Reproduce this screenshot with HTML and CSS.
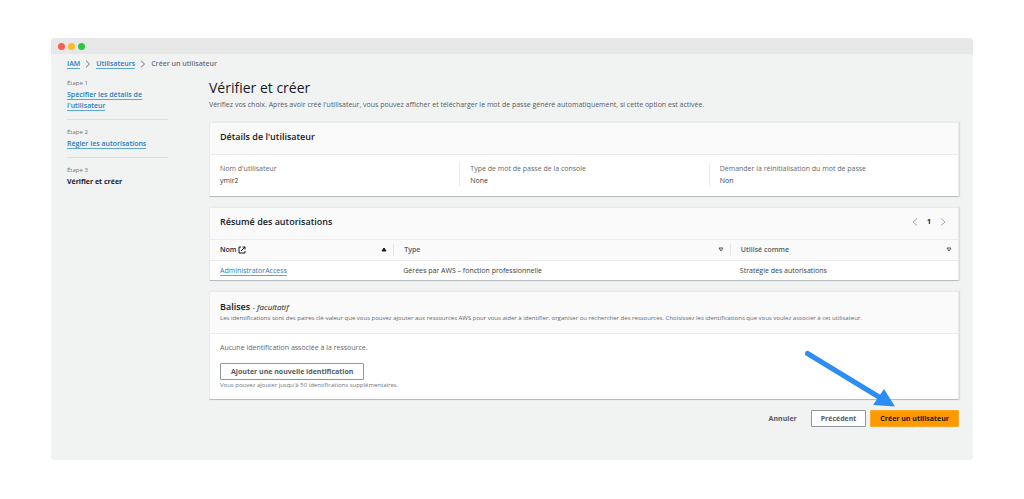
FILE: index.html
```html
<!DOCTYPE html>
<html lang="fr">
<head>
<meta charset="utf-8">
<title>Créer un utilisateur</title>
<link rel="stylesheet" href="styles.css">
</head>
<body>
<div class="window">
  <div class="titlebar"><span class="dot red"></span><span class="dot yellow"></span><span class="dot green"></span></div>
  <nav class="breadcrumb">
    <a href="#">IAM</a>
    <svg class="sep" viewBox="0 0 6 8"><path d="M1 .7 4.500 4 1 7.300"/></svg>
    <a href="#">Utilisateurs</a>
    <svg class="sep" viewBox="0 0 6 8"><path d="M1 .7 4.500 4 1 7.300"/></svg>
    <span>Créer un utilisateur</span>
  </nav>
  <div class="layout">
    <aside class="steps">
      <div class="step"><p>Étape 1</p><a href="#">Spécifier les détails de l'utilisateur</a></div>
      <div class="step"><p>Étape 2</p><a href="#">Régler les autorisations</a></div>
      <div class="step"><p>Étape 3</p><strong>Vérifier et créer</strong></div>
    </aside>
    <main>
      <h1>Vérifier et créer</h1>
      <p class="intro">Vérifiez vos choix. Après avoir créé l'utilisateur, vous pouvez afficher et télécharger le mot de passe généré automatiquement, si cette option est activée.</p>

      <section class="card">
        <header class="card-head"><h2>Détails de l'utilisateur</h2></header>
        <dl class="details">
          <div><dt>Nom d'utilisateur</dt><dd>ymir2</dd></div>
          <div><dt>Type de mot de passe de la console</dt><dd>None</dd></div>
          <div><dt>Demander la réinitialisation du mot de passe</dt><dd>Non</dd></div>
        </dl>
      </section>

      <section class="card">
        <header class="card-head">
          <h2>Résumé des autorisations</h2>
          <div class="pager">
            <button type="button" aria-label="Page précédente"><svg viewBox="0 0 6 8"><path d="M5 .5 1 4l4 3.500"/></svg></button>
            <b>1</b>
            <button type="button" aria-label="Page suivante"><svg viewBox="0 0 6 8"><path d="M1 .5 5 4 1 7.500"/></svg></button>
          </div>
        </header>
        <table>
          <colgroup><col class="col-name"><col class="col-type"><col class="col-use"></colgroup>
          <thead>
            <tr>
              <th scope="col" class="sorted"><div class="th"><span>Nom</span><svg class="ext" viewBox="0 0 8 8"><path d="M3 1H1v6h6V5M4.500 1H7v2.500M7 1 3 5"/></svg><svg class="sort full" viewBox="0 0 6 5"><path d="M3 1 5 4H1z"/></svg></div></th>
              <th scope="col"><div class="th"><span>Type</span><svg class="sort" viewBox="0 0 6 5"><path d="M1 1h4L3 4z"/></svg></div></th>
              <th scope="col"><div class="th"><span>Utilisé comme</span><svg class="sort" viewBox="0 0 6 5"><path d="M1 1h4L3 4z"/></svg></div></th>
            </tr>
          </thead>
          <tbody>
            <tr><td><a href="#">AdministratorAccess</a></td><td>Gérées par AWS – fonction professionnelle</td><td>Stratégie des autorisations</td></tr>
          </tbody>
        </table>
      </section>

      <section class="card">
        <header class="card-head tags-head">
          <h2>Balises <em>- facultatif</em></h2>
          <p>Les identifications sont des paires clé-valeur que vous pouvez ajouter aux ressources AWS pour vous aider à identifier, organiser ou rechercher des ressources. Choisissez les identifications que vous voulez associer à cet utilisateur.</p>
        </header>
        <div class="tags">
          <p>Aucune identification associée à la ressource.</p>
          <button type="button" class="btn">Ajouter une nouvelle identification</button>
          <small>Vous pouvez ajouter jusqu'à 50 identifications supplémentaires.</small>
        </div>
      </section>

      <footer class="actions">
        <button type="button" class="btn link">Annuler</button>
        <button type="button" class="btn">Précédent</button>
        <div class="target">
          <button type="button" class="btn primary">Créer un utilisateur</button>
          <svg class="arrow" viewBox="0 0 92 58" aria-hidden="true"><path class="shaft" d="M4.500 4.500 76 48"/><path class="tip" d="M81 40 92 57.500 70 56z"/></svg>
        </div>
      </footer>
    </main>
  </div>
</div>
</body>
</html>
```
FILE: styles.css
```css
* { box-sizing: border-box; }
body {
  margin: 0;
  padding: 38px 51px;
  background: #fff;
  color: #363d45;
  font: 7px/12px "Open Sans", "Noto Sans", sans-serif;
}
h1, h2, p, dl, dd { margin: 0; }
svg { fill: none; stroke: currentColor; flex: none; }
a {
  color: #1f7cc0;
  text-decoration: none;
  border-bottom: 1px solid #5fa6d8;
}
button { font: inherit; color: inherit; cursor: pointer; }

.window {
  background: #f1f3f3;
  border-radius: 4px;
  overflow: hidden;
  padding-bottom: 33px;
}
.titlebar {
  display: flex;
  align-items: center;
  gap: 3px;
  height: 16px;
  padding: 0 7px;
  background: #e7e7e7;
}
.dot { width: 7px; height: 7px; border-radius: 50%; }
.red { background: #ff5b54; }
.yellow { background: #fdbb2e; }
.green { background: #28c940; }

.breadcrumb {
  display: flex;
  align-items: center;
  height: 20px;
  padding: 0 16px;
  gap: 5px;
  font-weight: 600;
  line-height: 9px;
  color: #687078;
}
.breadcrumb span { border-bottom: 1px solid transparent; }
.sep { width: 6px; height: 8px; }

.layout {
  display: grid;
  grid-template-columns: 101px 1fr;
  gap: 41px;
  padding: 4px 14px 0 16px;
}
.step { line-height: 11px; padding-bottom: 8px; margin-bottom: 7px; border-bottom: 1px solid #dcdfdf; }
.step:last-child { border: 0; }
.step p { color: #6c757d; font-size: 6px; line-height: 11px; }
.step a { font-weight: 600; }
.step strong { color: #16191f; }

h1 { color: #16191f; font-size: 14px; font-weight: 400; line-height: 20px; }
.intro { color: #545b64; line-height: 14px; margin-bottom: 10px; }

.card {
  background: #fff;
  margin-bottom: 10px;
  border: 1px solid #e9ebeb;
  border-bottom-color: #b5bdbf;
  box-shadow: 1px 0 1px #d9dddd;
}
.card-head {
  display: flex;
  align-items: center;
  justify-content: space-between;
  min-height: 32px;
  padding: 0 10px 3px;
  background: #fafafa;
  border-bottom: 1px solid #ececec;
}
h2 { color: #16191f; font-size: 9px; line-height: 12px; font-weight: 600; }
h2 em { font-size: 8px; font-weight: 400; }

.details { display: grid; grid-template-columns: repeat(3, 1fr); padding: 8px 0 9px; }
.details div { padding: 0 10px; border-left: 1px solid #ececec; }
.details div:first-child { border-left-color: transparent; padding-left: 9px; }
.details dt { color: #5f6870; }

.pager { display: flex; align-items: center; gap: 9px; padding-right: 2px; color: #16191f; }
.pager button { display: flex; padding: 0; border: 0; background: none; color: #9aa5a6; }
.pager svg { width: 6px; height: 8px; }

table { width: 100%; border-collapse: collapse; table-layout: fixed; }
.col-name { width: 24.5%; }
.col-type { width: 45%; }
th, td { padding: 1px 10px 0; text-align: left; height: 20px; }
thead { background: #fafafa; border-bottom: 1px solid #ececec; }
th { padding: 0; color: #545b64; font-weight: 600; }
.th { display: flex; align-items: center; padding: 0 6px 0 10px; }
th + th .th { border-left: 1px solid #e6e6e6; }
.sorted { color: #16191f; }
.sort { width: 6px; height: 5px; margin-left: auto; }
.full { fill: currentColor; }
.ext { width: 8px; height: 8px; margin-left: 2px; }

.tags-head { display: block; padding: 9px 10px; }
.tags-head p { color: #5f6870; font-size: 6px; line-height: 11px; }
.tags { display: flex; flex-direction: column; align-items: flex-start; padding: 8px 10px; }
.tags p { color: #5f6870; margin-bottom: 9px; }
.tags small { color: #6c757d; font-size: 6px; line-height: 11px; }

.btn {
  height: 17px;
  padding: 0 10px;
  border: 1px solid #8f979d;
  border-radius: 1px;
  background: #fff;
  color: #545b64;
  font-weight: 700;
  line-height: 15px;
  white-space: nowrap;
}
.link { background: none; border-color: transparent; }
.primary { background: #ff9900; border-color: #ffa826; color: #16191f; }
.actions { display: flex; justify-content: flex-end; gap: 4px; }
.actions .btn { padding: 0 9px; }
.target { position: relative; }
.arrow {
  position: absolute;
  right: 64px;
  bottom: 20px;
  width: 92px;
  height: 58px;
  color: #2e8df5;
  pointer-events: none;
}
.shaft { stroke-width: 5; stroke-linecap: round; }
.tip { fill: currentColor; stroke: none; }
```
